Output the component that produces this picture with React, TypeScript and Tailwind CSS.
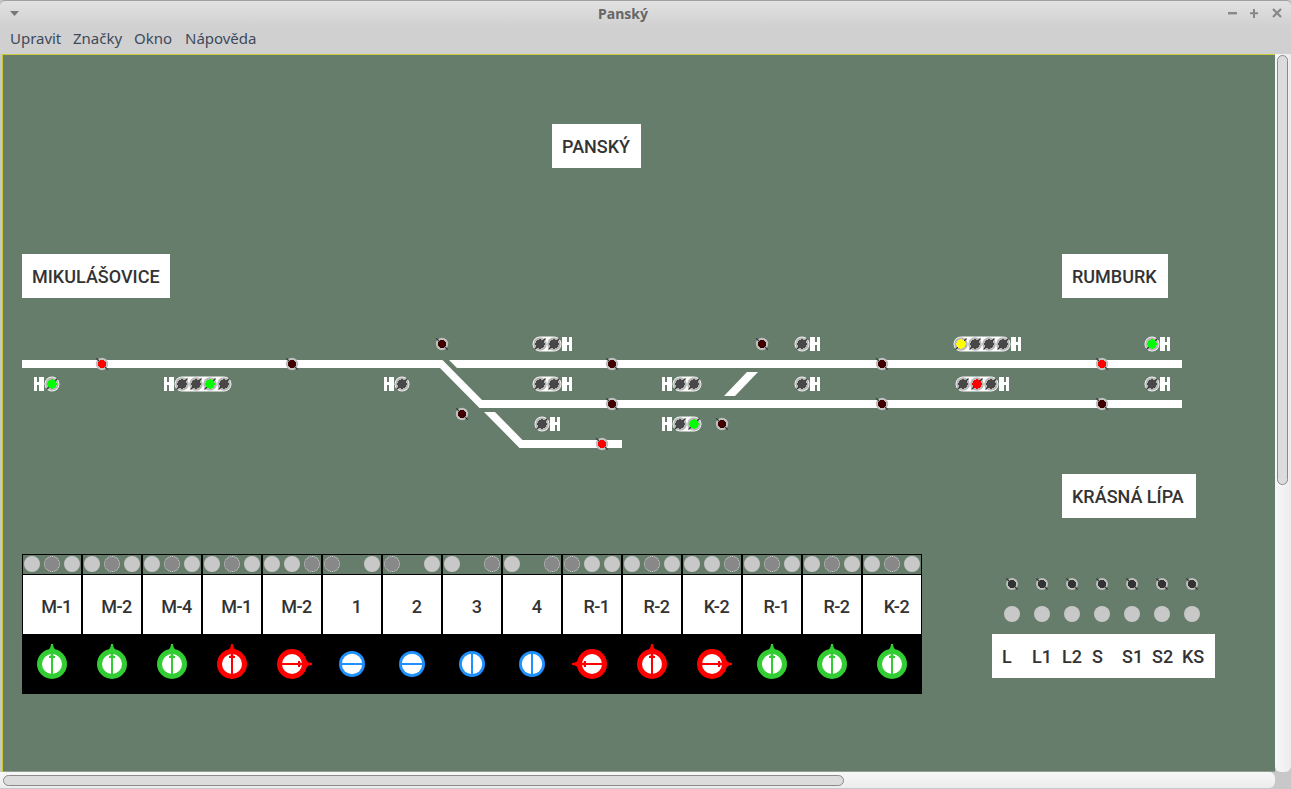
const lampColors: Record<string, string> = { d: "#484848", g: "#00ff00", r: "#ff0000", y: "#ffff00" };

type Sig = { side: "l" | "r"; xs: number[]; y: number; s: string };

const signals: Sig[] = [
  { side: "l", xs: [52], y: 384, s: "g" },
  { side: "l", xs: [182, 196, 210, 224], y: 384, s: "ddgd" },
  { side: "l", xs: [402], y: 384, s: "d" },
  { side: "l", xs: [680, 694], y: 384, s: "dd" },
  { side: "l", xs: [680, 694], y: 424, s: "dg" },
  { side: "r", xs: [540, 554], y: 344, s: "dd" },
  { side: "r", xs: [540, 554], y: 384, s: "dd" },
  { side: "r", xs: [542], y: 424, s: "d" },
  { side: "r", xs: [802], y: 344, s: "d" },
  { side: "r", xs: [802], y: 384, s: "d" },
  { side: "r", xs: [961, 975, 989, 1003], y: 344, s: "yddd" },
  { side: "r", xs: [963, 977, 991], y: 384, s: "drd" },
  { side: "r", xs: [1152], y: 344, s: "g" },
  { side: "r", xs: [1152], y: 384, s: "d" },
];

const trackDots: [number, number, string][] = [
  [102, 364, "#ff0000"],
  [292, 364, "#400000"],
  [442, 344, "#400000"],
  [612, 364, "#400000"],
  [462, 414, "#400000"],
  [612, 404, "#400000"],
  [602, 444, "#ff0000"],
  [762, 344, "#400000"],
  [722, 424, "#400000"],
  [882, 364, "#400000"],
  [882, 404, "#400000"],
  [1102, 364, "#ff0000"],
  [1102, 404, "#400000"],
];

const columns: { label: string; dots: string; kind: "g" | "r" | "b"; rot: number }[] = [
  { label: "M-1", dots: "ldl", kind: "g", rot: 0 },
  { label: "M-2", dots: "ldl", kind: "g", rot: 0 },
  { label: "M-4", dots: "ldl", kind: "g", rot: 0 },
  { label: "M-1", dots: "ldl", kind: "r", rot: 0 },
  { label: "M-2", dots: "lld", kind: "r", rot: 90 },
  { label: "1", dots: "d_l", kind: "b", rot: 90 },
  { label: "2", dots: "d_l", kind: "b", rot: 90 },
  { label: "3", dots: "l_d", kind: "b", rot: 0 },
  { label: "4", dots: "l_d", kind: "b", rot: 0 },
  { label: "R-1", dots: "dll", kind: "r", rot: -90 },
  { label: "R-2", dots: "ldl", kind: "r", rot: 0 },
  { label: "K-2", dots: "lld", kind: "r", rot: 90 },
  { label: "R-1", dots: "ldl", kind: "g", rot: 0 },
  { label: "R-2", dots: "ldl", kind: "g", rot: 0 },
  { label: "K-2", dots: "ldl", kind: "g", rot: 0 },
];

const narrow = "font-['Roboto','Liberation_Sans',sans-serif] font-medium whitespace-nowrap";

function Post({ x, y, flip }: { x: number; y: number; flip: boolean }) {
  const a = flip ? x + 7 : x;
  const b = flip ? x : x + 5;
  return (
    <g fill="#fff" shapeRendering="crispEdges">
      <rect x={a} y={y - 7} width={3} height={14} />
      <rect x={x} y={y - 2} width={10} height={3} />
      <rect x={b} y={y - 7} width={5} height={14} />
    </g>
  );
}

function Signal({ sig }: { sig: Sig }) {
  const first = sig.xs[0];
  const last = sig.xs[sig.xs.length - 1];
  const postX = sig.side === "l" ? first - 18 : last + 8;
  return (
    <g>
      <Post x={postX} y={sig.y} flip={sig.side === "r"} />
      <rect x={first - 7.5} y={sig.y - 7.5} width={last - first + 15} height={15} rx={7.5} fill="#fff" />
      {sig.xs.map((x, i) => (
        <g key={x}>
          <circle cx={x} cy={sig.y} r={6.8} fill="#b8b8b8" />
          <line x1={x - 5.5} y1={sig.y + 5.5} x2={x + 5.5} y2={sig.y - 5.5} stroke="#333" strokeWidth={1.2} />
          <circle cx={x} cy={sig.y} r={4.7} fill={lampColors[sig.s[i]]} shapeRendering="crispEdges" />
        </g>
      ))}
    </g>
  );
}

function TrackDot({ x, y, c, r = 6.2, ir = 4.3 }: { x: number; y: number; c: string; r?: number; ir?: number }) {
  return (
    <g>
      <circle cx={x} cy={y} r={r} fill="#c0c0c0" />
      <line x1={x - r + 0.5} y1={y - r + 0.5} x2={x + r - 0.5} y2={y + r - 0.5} stroke="#333" strokeWidth={1.2} />
      <circle cx={x} cy={y} r={ir} fill={c} shapeRendering="crispEdges" />
    </g>
  );
}

function Switch({ kind, rot }: { kind: "g" | "r" | "b"; rot: number }) {
  if (kind === "b") {
    return (
      <svg width="58" height="60" viewBox="-29 -30 58 60" className="block">
        <g transform={`rotate(${rot})`}>
          <circle r={13} fill="#1e90ff" />
          <circle r={10.2} fill="#fff" />
          <rect x={-1} y={-11} width={2} height={22} fill="#1e90ff" />
        </g>
      </svg>
    );
  }
  const color = kind === "g" ? "#32cd32" : "#ff0000";
  return (
    <svg width="58" height="60" viewBox="-29 -30 58 60" className="block">
      <g transform={`rotate(${rot})`}>
        <polygon points="-4,-13 -1.5,-17 -1,-20 1,-20 1.5,-17 4,-13" fill={color} />
        <circle r={15} fill={color} />
        <circle r={10} fill="#fff" />
        <rect x={-1} y={-10} width={2} height={20} fill={color} />
        <polygon points="-3,-7 0,-10 3,-7" fill={color} />
        <rect x={-3} y={-8} width={6} height={2} fill={color} />
      </g>
    </svg>
  );
}

function Label({ text, className }: { text: string; className: string }) {
  return (
    <div className={`absolute flex h-[44px] items-center bg-white px-[10px] text-[18px] text-[#333] ${narrow} ${className}`}>
      {text}
    </div>
  );
}

export default function App() {
  return (
    <div className="flex h-[789px] w-[1291px] flex-col overflow-hidden bg-[#c8c8c8] font-['Noto_Sans',sans-serif]">
      {/* title bar */}
      <div className="relative flex h-[27px] items-center justify-center rounded-t-[5px] border-t border-t-[#a0a0a0] bg-gradient-to-b from-[#e2e2e2] to-[#d0d0d0] text-[14px] font-bold text-[#666]">
        <span className="pb-px pr-[45px]">Panský</span>
        <svg width="10" height="6" viewBox="0 0 10 6" className="absolute left-[10px] top-[10px]">
          <polygon points="0,0 9,0 4.5,5" fill="#777" />
        </svg>
        <svg width="60" height="12" viewBox="0 0 60 12" className="absolute right-[5px] top-[6px]">
          <rect x="2" y="5" width="9" height="2.4" fill="#888" />
          <path d="M24 5.2h8v2h-8zM27 2h2v9h-2z" fill="#888" />
          <path d="M47 2l8 8M55 2l-8 8" stroke="#888" strokeWidth="2.2" />
        </svg>
      </div>
      {/* menu */}
      <div className="flex h-[27px] items-center bg-[#d0d0d0] pb-[5px] pl-[10px] text-[15px] leading-none tracking-[-0.02px] text-[#3d4a5c]">
        <span className="w-[63px]">Upravit</span>
        <span className="w-[61px]">Značky</span>
        <span className="w-[51px]">Okno</span>
        <span>Nápověda</span>
      </div>
      {/* main */}
      <div className="flex h-[718px]">
        <div className="ml-[2px] w-[1273px] border-l border-t border-[#c9c93a] bg-[#657d6a]">
          <div className="relative h-full w-full border-b border-b-[#8f9f93]">
            <svg width="1272" height="717" viewBox="3 55 1272 717" className="absolute left-0 top-0">
              <g fill="#fff">
                <polygon points="22,360 442.5,360 482,400 1182,400 1182,408 479.5,408 440,368 22,368" />
                <polygon points="449,360 1182,360 1182,368 457,368" />
                <polygon points="484,412 495,412 522.5,440 622,440 622,448 519.5,448" />
                <polygon points="747,372 758,372 735,396 724,396" />
              </g>
              {signals.map((s, i) => (
                <Signal key={i} sig={s} />
              ))}
              {trackDots.map(([x, y, c], i) => (
                <TrackDot key={i} x={x} y={y} c={c} />
              ))}
              {[1012, 1042, 1072, 1102, 1132, 1162, 1192].map((x) => (
                <g key={x}>
                  <TrackDot x={x} y={584} c="#333333" r={6} ir={3.8} />
                  <circle cx={x} cy={614} r={8} fill="#c8c8c8" />
                </g>
              ))}
            </svg>

            <Label text="PANSKÝ" className="left-[549px] top-[69px] w-[89px]" />
            <Label text="MIKULÁŠOVICE" className="left-[19px] top-[199px] w-[148px]" />
            <Label text="RUMBURK" className="left-[1059px] top-[199px] w-[106px]" />
            <Label text="KRÁSNÁ LÍPA" className="left-[1059px] top-[419px] w-[134px]" />

            {/* turnout table */}
            <div className="absolute left-[19px] top-[499px] grid w-[900px] grid-cols-[repeat(15,60px)] grid-rows-[21px_59px_60px]">
              {columns.map((c, i) => (
                <div key={`d${i}`} className="flex h-[21px] items-start gap-[4px] border border-black pl-px pt-px">
                  {c.dots.split("").map((d, j) =>
                    d === "_" ? (
                      <div key={j} className="h-[16px] w-[16px]" />
                    ) : d === "l" ? (
                      <div key={j} className="h-[16px] w-[16px] rounded-full bg-[#c8c8c8]" />
                    ) : (
                      <div key={j} className="h-[16px] w-[16px] rounded-full border border-dotted border-[#d8d8d8] bg-[#888888]" />
                    ),
                  )}
                </div>
              ))}
              {columns.map((c, i) => (
                <div
                  key={`l${i}`}
                  className={`flex items-center justify-center border-x border-black bg-white pl-[9px] pt-[3px] text-[18px] tracking-[-0.5px] text-[#333] ${narrow}`}
                >
                  {c.label}
                </div>
              ))}
              {columns.map((c, i) => (
                <div key={`s${i}`} className="flex items-center justify-center bg-black">
                  <Switch kind={c.kind} rot={c.rot} />
                </div>
              ))}
            </div>

            {/* legend */}
            <div className={`absolute left-[989px] top-[579px] grid h-[44px] w-[223px] grid-cols-[repeat(7,30px)] items-center bg-white pl-[10px] text-[18px] text-[#333] ${narrow}`}>
              {["L", "L1", "L2", "S", "S1", "S2", "KS"].map((t) => (
                <span key={t}>{t}</span>
              ))}
            </div>
          </div>
        </div>
        {/* vertical scrollbar */}
        <div className="flex h-[718px] w-[16px] flex-col rounded-b-[6px] bg-gradient-to-r from-[#f8f8f8] to-[#ececec] pl-[2px] pr-[2px] pt-[1px]">
          <div className="h-[430px] w-[11px] rounded-full border border-[#8a8a8a] bg-[#dcdcdc]" />
        </div>
      </div>
      {/* horizontal scrollbar */}
      <div className="flex h-[17px]">
        <div className="h-[16px] w-[1275px] rounded-r-[6px] bg-gradient-to-b from-[#f8f8f8] to-[#ececec] pl-[3px] pt-[3px]">
          <div className="h-[11px] w-[841px] rounded-full border border-[#8a8a8a] bg-[#dcdcdc]" />
        </div>
      </div>
    </div>
  );
}
